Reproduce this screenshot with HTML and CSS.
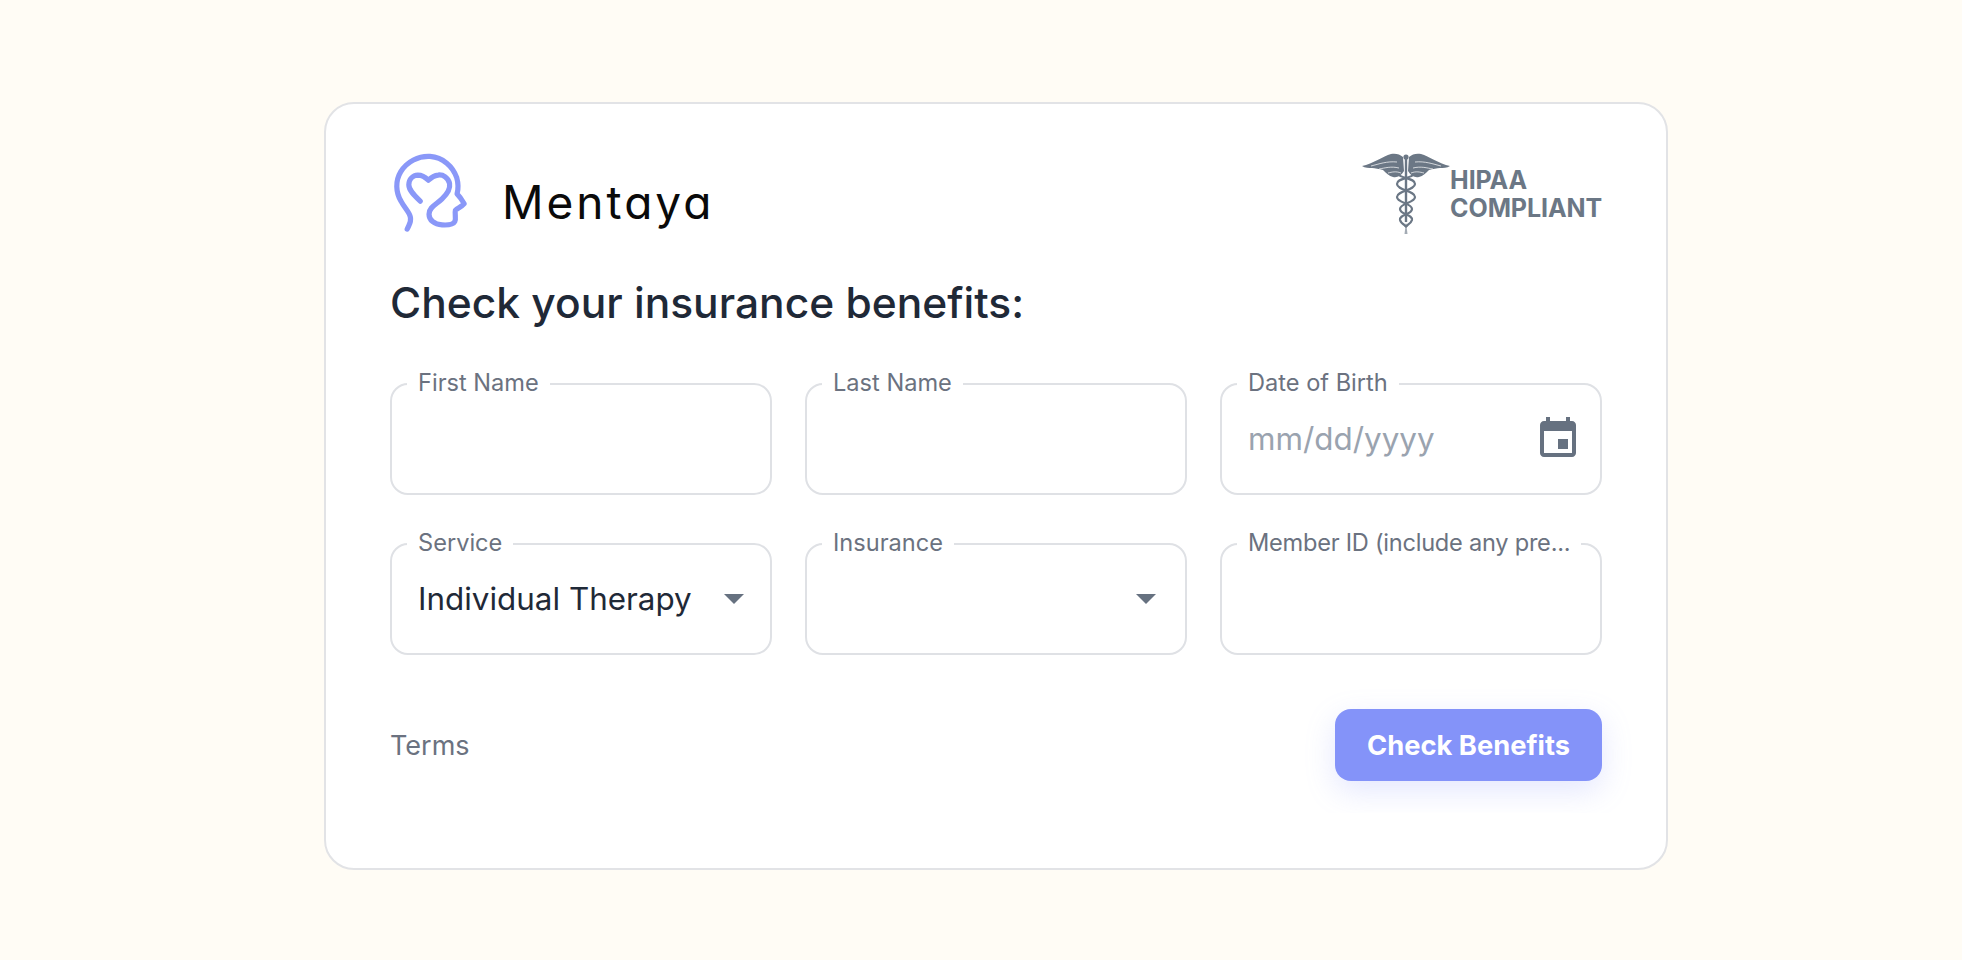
FILE: index.html
```html
<!DOCTYPE html>
<html lang="en">
<head>
<meta charset="utf-8">
<title>Mentaya – Check your insurance benefits</title>
<link rel="stylesheet" href="styles.css">
</head>
<body>
<main class="page">
  <form class="card">
    <header class="brand-row">
      <div class="brand">
        <svg class="brand-mark" viewBox="0 0 270 285" aria-hidden="true">
          <path d="M65 258C70 245 78 238 75 222C72 205 58 195 46 172C30 145 28 110 45 82C65 50 100 33 135 35C175 38 205 65 217 100C222 118 222 135 218 150C226 158 234 170 240 180C232 190 220 193 213 200C210 212 216 225 211 235C206 245 190 246 172 245C148 244 132 230 132 212C132 190 155 182 172 165C188 150 198 135 195 118C191 100 175 90 160 92C147 93 138 100 130 108C122 100 112 92 98 92C82 93 70 105 70 122C70 140 90 158 105 172"/>
        </svg>
        <span class="brand-name">Mentaya</span>
      </div>
      <div class="hipaa">
        <svg class="caduceus" viewBox="0 0 110 95" aria-hidden="true">
          <path class="wing" d="M7 22C18 20 28 12 36 10C40 9 45 10 48 13L49 27C46 32 42 34 38 33C34 32 31 29 28 26C24 25 20 24 17 24C14 24 10 24 7 22Z"/>
          <path class="wing" d="M95 22C84 20 74 12 66 10C62 9 57 10 54 13L53 27C56 32 60 34 64 33C68 32 71 29 74 26C78 25 82 24 85 24C88 24 92 24 95 22Z"/>
          <path class="feather" d="M16 22C24 20 32 17 42 18M24 25C30 24 36 22 44 24M33 29C37 28 41 27 46 29"/>
          <path class="feather" d="M86 22C78 20 70 17 60 18M78 25C72 24 66 22 58 24M69 29C65 28 61 27 56 29"/>
          <circle class="wing" cx="51" cy="13" r="2.6"/>
          <path class="staff" d="M51 14V78"/>
          <path class="staff-tip" d="M51 78L49.5 90H52.5Z"/>
          <path class="snake" d="M60 30C54 35 42 34 42 40C42 46 60 47 60 53C60 59 45 59 45 65C45 71 58 70 57 76C56 80 52 81 50 83"/>
          <path class="snake" d="M42 30C48 35 60 34 60 40C60 46 42 47 42 53C42 59 57 59 57 65C57 71 44 70 45 76C46 80 50 81 52 83"/>
        </svg>
        <div class="hipaa-text"><span>HIPAA</span><span>COMPLIANT</span></div>
      </div>
    </header>

    <h1 class="title">Check your insurance benefits:</h1>

    <div class="fields">
      <fieldset class="field">
        <legend>First Name</legend>
        <div class="control"><input class="input" type="text" aria-label="First Name"></div>
      </fieldset>
      <fieldset class="field">
        <legend>Last Name</legend>
        <div class="control"><input class="input" type="text" aria-label="Last Name"></div>
      </fieldset>
      <fieldset class="field">
        <legend>Date of Birth</legend>
        <div class="control">
          <input class="input" type="text" placeholder="mm/dd/yyyy" aria-label="Date of Birth">
          <svg class="calendar" viewBox="0 0 24 24" aria-hidden="true"><path d="M17 12h-5v5h5v-5zM16 1v2H8V1H6v2H5c-1.11 0-1.99.9-1.99 2L3 19c0 1.1.89 2 2 2h14c1.1 0 2-.9 2-2V5c0-1.1-.9-2-2-2h-1V1h-2zm3 18H5V8h14v11z"/></svg>
        </div>
      </fieldset>
      <fieldset class="field">
        <legend>Service</legend>
        <div class="control">
          <select class="input select" aria-label="Service"><option>Individual Therapy</option></select>
          <svg class="caret" viewBox="0 0 20 10" aria-hidden="true"><path d="M0 0H20L10 10Z"/></svg>
        </div>
      </fieldset>
      <fieldset class="field">
        <legend>Insurance</legend>
        <div class="control">
          <select class="input select" aria-label="Insurance"><option></option></select>
          <svg class="caret caret-inset" viewBox="0 0 20 10" aria-hidden="true"><path d="M0 0H20L10 10Z"/></svg>
        </div>
      </fieldset>
      <fieldset class="field">
        <legend class="legend-long">Member ID (include any pre...</legend>
        <div class="control"><input class="input" type="text" aria-label="Member ID"></div>
      </fieldset>
    </div>

    <footer class="actions">
      <a class="terms" href="#">Terms</a>
      <button class="submit" type="button">Check Benefits</button>
    </footer>
  </form>
</main>
</body>
</html>
```
FILE: styles.css
```css
* { box-sizing: border-box; }

html, body {
  margin: 0;
  height: 100%;
  overflow: hidden;
}

body {
  background: #fffcf5;
  font-family: Inter, "Liberation Sans", sans-serif;
  color: #1f2937;
}

.page {
  padding: 102px 294px 0 324px;
}

.card {
  height: 768px;
  padding: 40px 64px 0;
  background: #fff;
  border: 2px solid #e2e3e6;
  border-radius: 30px;
  display: flex;
  flex-direction: column;
}

.brand-row {
  display: flex;
  justify-content: space-between;
  align-items: flex-start;
  height: 90px;
}

.brand {
  display: flex;
  align-items: center;
  margin-left: -4px;
}

.brand-mark {
  width: 88px;
  height: 95px;
  fill: none;
  stroke: #8a98f8;
  stroke-width: 16;
  stroke-linecap: round;
  stroke-linejoin: round;
}

.brand-name {
  margin-left: 28px;
  margin-top: 20px;
  font-size: 46px;
  font-weight: 400;
  letter-spacing: 3px;
  color: #0a0a0a;
  font-feature-settings: "cv11" 1;
}

.hipaa {
  display: flex;
}

.caduceus {
  width: 110px;
  height: 95px;
  margin-right: -15px;
}

.wing { fill: #6b7785; }
.feather { stroke: #fff; stroke-width: 0.7; fill: none; }
.staff { stroke: #6b7785; stroke-width: 2.4; fill: none; }
.staff-tip { fill: #a3abb4; }
.snake { stroke: #6b7785; stroke-width: 2.2; fill: none; }

.hipaa-text {
  display: flex;
  flex-direction: column;
  padding-top: 22px;
  font-size: 25px;
  line-height: 28px;
  font-weight: 700;
  letter-spacing: -0.1px;
  color: #6b7785;
}

.title {
  margin: 44px 0 0;
  font-size: 42.5px;
  line-height: 50px;
  font-weight: 500;
  color: #1f2937;
}

.fields {
  margin-top: 41px;
  display: grid;
  grid-template-columns: repeat(3, minmax(0, 1fr));
  column-gap: 33px;
  row-gap: 34px;
}

.field {
  min-width: 0;
  margin: 0;
  padding: 0;
  height: 126px;
  border: 2px solid #dfe1e5;
  border-radius: 18px;
}

.field legend {
  margin-left: 15px;
  padding: 0 11px 2px;
  font-size: 23.6px;
  line-height: 28px;
  color: #6b7280;
  white-space: nowrap;
}

.field .legend-long {
  letter-spacing: -0.25px;
}

.control {
  display: flex;
  align-items: center;
  height: 80px;
  padding: 0 26px;
}

.input {
  flex: 1;
  min-width: 0;
  height: 44px;
  padding: 0;
  border: 0;
  outline: 0;
  background: transparent;
  font-family: inherit;
  font-size: 31.4px;
  color: #1f2937;
}

.input::placeholder {
  color: #9aa3af;
  opacity: 1;
}

.select {
  appearance: none;
}

.calendar {
  width: 48px;
  height: 48px;
  margin-right: -8px;
  fill: #667180;
}

.caret {
  width: 20px;
  height: 10px;
  fill: #667180;
}

.caret-inset {
  margin-right: 3px;
}

.actions {
  display: flex;
  justify-content: space-between;
  align-items: center;
  margin: 22px -32px 0;
  padding: 32px;
  overflow: hidden;
}

.terms {
  font-size: 27px;
  color: #6b7280;
  text-decoration: none;
}

.submit {
  width: 267px;
  height: 72px;
  border: 0;
  border-radius: 16px;
  background: #8493f9;
  box-shadow: 0 10px 30px rgba(132, 147, 249, 0.22);
  font-family: inherit;
  font-size: 27.3px;
  font-weight: 700;
  color: #fff;
}
```
